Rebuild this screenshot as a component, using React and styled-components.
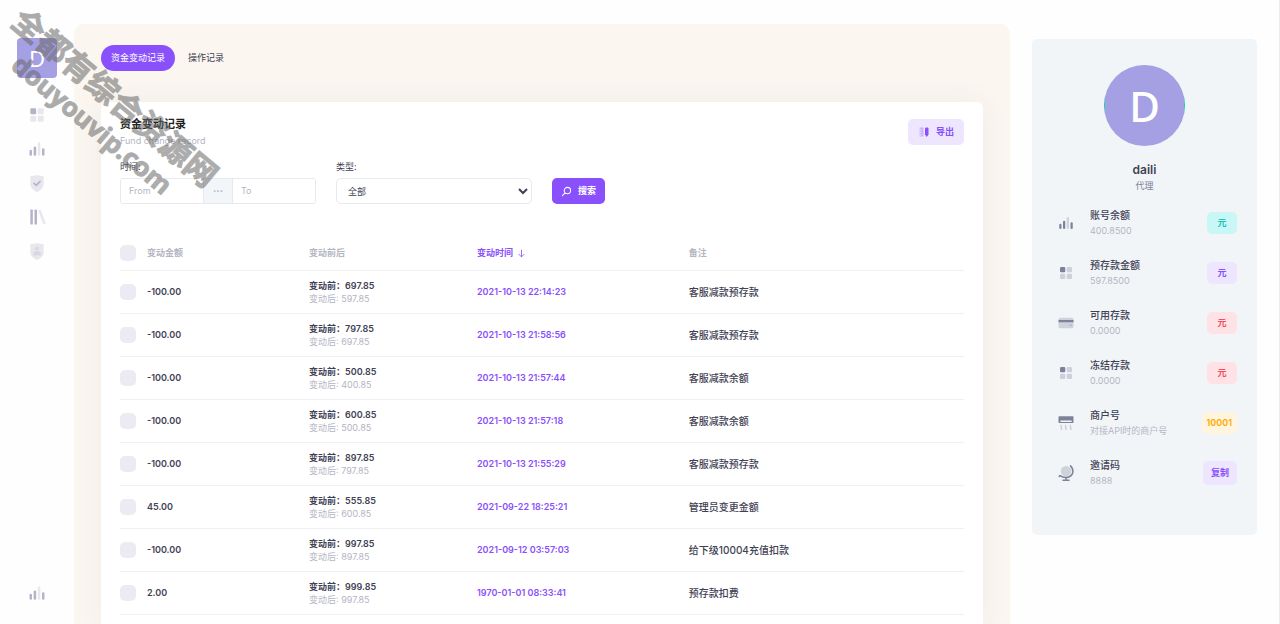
import React, { useState } from "react";
import styled, { createGlobalStyle } from "styled-components";

const GlobalStyle = createGlobalStyle`
  * {
    box-sizing: border-box;
  }

  body {
    margin: 0;
    background: #fefefe;
    color: #3f4254;
    font-family: Inter, "Noto Sans CJK SC", sans-serif;
    font-size: 9px;
    line-height: 14px;
  }

  button,
  input,
  select {
    font: inherit;
    color: inherit;
    margin: 0;
  }

  button {
    border: none;
    background: none;
    padding: 0;
    cursor: pointer;
  }
`;

const Shell = styled.div`
  position: relative;
  display: flex;
  min-height: 100vh;
`;

const Sidebar = styled.aside`
  flex: 0 0 74px;
  display: flex;
  flex-direction: column;
  align-items: center;
  padding: 38px 0 14px;
`;

const Logo = styled.a`
  width: 40px;
  height: 40px;
  border-radius: 4px;
  background: #a5a0e3;
  color: #fff;
  font: 22px/40px "Noto Sans", sans-serif;
  text-align: center;
  text-decoration: none;
`;

const SideNav = styled.nav`
  display: flex;
  flex-direction: column;
  margin-top: 20px;
`;

const SideButton = styled.button`
  display: flex;
  align-items: center;
  justify-content: center;
  width: 34px;
  height: 34px;
  margin-top: ${({ $bottom }) => ($bottom ? "auto" : 0)};
  color: #b5b3c9;
`;

const Main = styled.main`
  flex: 1;
  min-width: 0;
  display: flex;
  flex-direction: column;
  margin-top: 24px;
  padding: 21px 27px 0;
  border-radius: 10px 10px 0 0;
  background: #fbf6f0;
`;

const Tabs = styled.div`
  display: flex;
  gap: 3px;
`;

const Tab = styled.button`
  height: 26px;
  padding: 0 10px;
  border-radius: 13px;
  background: ${({ $active }) => ($active ? "#8950fc" : "transparent")};
  color: ${({ $active }) => ($active ? "#fff" : "#3f4254")};
`;

const Card = styled.section`
  flex: 1;
  margin-top: 31px;
  padding: 14px 19px 9px;
  border-radius: 6px 6px 0 0;
  background: #fff;
  box-shadow: 0 0 30px rgba(82, 63, 105, 0.06);
`;

const CardHeader = styled.header`
  display: flex;
  justify-content: space-between;
  align-items: center;
`;

const Title = styled.h3`
  margin: 0;
  font-size: 11px;
  line-height: 16px;
  font-weight: 700;
  color: #212121;
`;

const Subtitle = styled.p`
  margin: 2px 0 0;
  line-height: 14px;
  color: #b5b5c3;
`;

const ActionButton = styled.button`
  display: flex;
  align-items: center;
  justify-content: center;
  gap: 6px;
  height: 26px;
  padding: 0 ${({ $light }) => ($light ? "10px" : "9px")};
  border-radius: 5px;
  font-weight: 600;
  background: ${({ $light }) => ($light ? "#eee5ff" : "#8950fc")};
  color: ${({ $light }) => ($light ? "#8950fc" : "#fff")};
`;

const Filters = styled.form`
  display: grid;
  grid-template-columns: repeat(4, 1fr);
  column-gap: 20px;
  align-items: end;
  justify-items: start;
  margin-top: 12px;
`;

const Field = styled.div`
  width: 100%;

  label {
    display: block;
    margin-bottom: 4px;
  }
`;

const DateRange = styled.div`
  display: flex;
  height: 26px;
  border: 1px solid #e8e8f0;
  border-radius: 3px;
  overflow: hidden;

  input {
    flex: 1;
    width: 0;
    padding: 0 8px;
    border: none;
    outline: none;
    background: #fff;
  }

  input::placeholder {
    color: #b5b5c3;
  }

  span {
    width: 30px;
    display: flex;
    align-items: center;
    justify-content: center;
    border: solid #e8e8f0;
    border-width: 0 1px;
    background: #f3f6f9;
    color: #b5b5c3;
    font-size: 6px;
  }
`;

const Select = styled.select`
  display: block;
  width: 100%;
  height: 26px;
  padding: 0 7px;
  border: 1px solid #e8e8f0;
  border-radius: 5px;
  background: #fff;
`;

const Table = styled.table`
  width: 100%;
  margin-top: 33px;
  table-layout: fixed;
  border-collapse: collapse;
  text-align: left;

  th {
    height: 33px;
    padding: 0;
    font-weight: 600;
    color: #b5b5c3;
    border-bottom: 1px solid #f0f0f5;
  }

  td {
    height: 43px;
    padding: 0;
    font-weight: 600;
    border-bottom: 1px solid #f0f0f5;
  }
`;

const Checkbox = styled.input`
  display: block;
  appearance: none;
  width: 16px;
  height: 16px;
  border-radius: 5px;
  background: #ebebf3;

  &:checked {
    background: #8950fc;
  }
`;

const SortButton = styled.button`
  display: flex;
  align-items: center;
  gap: 4px;
  color: #8950fc;
`;

const Before = styled.div`
  line-height: 13px;
`;

const After = styled.div`
  line-height: 13px;
  font-weight: 400;
  color: #b5b5c3;
`;

const DateCell = styled.td`
  color: #8950fc;
`;

const NoteCell = styled.td`
  && {
    font-size: 10px;
    font-weight: 500;
  }
`;

const Profile = styled.aside`
  flex: 0 0 270px;
  padding: 39px 22px 0;
  border-right: 1px solid #ececec;
`;

const ProfileCard = styled.div`
  padding: 26px 20px 32px;
  border-radius: 5px;
  background: #f2f5f8;
`;

const Avatar = styled.div`
  width: 81px;
  height: 81px;
  margin: 0 auto;
  border-radius: 50%;
  background: linear-gradient(#a5a0e3, #a5a0e3) center / 79px 81px no-repeat
    #1bc5bd;
  color: #fff;
  font: 500 42px/81px "Noto Sans", sans-serif;
  text-align: center;
`;

const UserName = styled.h4`
  margin: 15px 0 0;
  font-size: 12px;
  line-height: 18px;
  font-weight: 600;
  text-align: center;
`;

const Role = styled.p`
  margin: 0 0 10px;
  color: #7e8299;
  text-align: center;
`;

const InfoRow = styled.div`
  display: flex;
  align-items: center;
  height: 50px;
  padding: 0 0 10px 5px;
  color: #7e8299;

  svg {
    flex: none;
    margin-right: 15px;
  }
`;

const InfoText = styled.div`
  flex: 1;
  white-space: nowrap;

  strong {
    display: block;
    font-size: 10px;
    line-height: 16px;
    font-weight: 500;
    color: #3f4254;
  }

  span {
    display: block;
    line-height: 16px;
    color: #b5b5c3;
  }
`;

const tones = {
  teal: ["#c9f7f5", "#1bc5bd"],
  purple: ["#eee5ff", "#8950fc"],
  red: ["#ffe2e5", "#f64e60"],
  orange: ["#fff4de", "#ffa800"],
};

const Badge = styled.span`
  min-width: 30px;
  padding: 4px 5px;
  border-radius: 5px;
  font-weight: 600;
  text-align: center;
  background: ${({ $tone }) => tones[$tone][0]};
  color: ${({ $tone }) => tones[$tone][1]};
`;

const CopyButton = styled(Badge)`
  padding: 5px 8px;
`;

const Watermark = styled.div`
  position: absolute;
  top: 0;
  left: 30px;
  transform: rotate(40deg);
  transform-origin: 0 0;
  font-family: "Open Sans", "Noto Sans CJK SC", sans-serif;
  font-weight: 700;
  color: #696969;
  opacity: 0.55;
  white-space: nowrap;
  pointer-events: none;

  div {
    -webkit-text-stroke: 1px #696969;
  }

  div:first-child {
    font-size: 32px;
    line-height: 40px;
  }

  div:last-child {
    padding-left: 28px;
    font-size: 26px;
    line-height: 30px;
  }
`;

const SHIELD =
  "M4 4l7.63-1.43c.24-.05.5-.05.74 0L20 4v9.28c0 2.94-1.51 5.66-4 7.22l-3.47 2.17c-.32.2-.74.2-1.06 0L8 20.5c-2.49-1.56-4-4.28-4-7.22z";

const shapes = {
  bars: (
    <>
      <rect opacity=".3" x="13" y="4" width="3" height="16" rx="1.5" />
      <rect x="8" y="9" width="3" height="11" rx="1.5" />
      <rect x="18" y="11" width="3" height="9" rx="1.5" />
      <rect x="3" y="13" width="3" height="7" rx="1.5" />
    </>
  ),
  blocks: (
    <>
      <rect x="4" y="4" width="7" height="7" rx="1.5" />
      <g opacity=".3">
        <rect x="13" y="4" width="7" height="7" rx="1.5" />
        <rect x="4" y="13" width="7" height="7" rx="1.5" />
        <rect x="13" y="13" width="7" height="7" rx="1.5" />
      </g>
    </>
  ),
  shieldCheck: (
    <>
      <path opacity=".3" d={SHIELD} />
      <path
        d="M8.5 12.5l2.6 2.3 4.6-4.8"
        fill="none"
        stroke="currentColor"
        strokeWidth="2"
        strokeLinecap="round"
      />
    </>
  ),
  shieldUser: (
    <>
      <path opacity=".3" d={SHIELD} />
      <circle opacity=".3" cx="12" cy="9" r="2.2" />
      <path
        opacity=".3"
        d="M7 16.5c.2-2.8 2.3-4.5 5-4.5s4.8 1.7 5 4.5c0 .3-.2.5-.5.5h-9c-.3 0-.5-.2-.5-.5z"
      />
    </>
  ),
  library: (
    <>
      <rect x="4" y="3" width="3" height="18" rx="1" />
      <rect x="9" y="3" width="3" height="18" rx="1" />
      <rect
        opacity=".3"
        x="16.5"
        y="3"
        width="3"
        height="18"
        rx="1"
        transform="rotate(-20 18 12)"
      />
    </>
  ),
  card: (
    <>
      <rect opacity=".3" x="2" y="5" width="20" height="14" rx="2" />
      <rect x="2" y="8" width="20" height="3" />
      <rect opacity=".3" x="16" y="14" width="4" height="2" rx="1" />
    </>
  ),
  airCon: (
    <>
      <path
        fillRule="evenodd"
        d="M3 3h18a1 1 0 0 1 1 1v7a1 1 0 0 1-1 1H3a1 1 0 0 1-1-1V4a1 1 0 0 1 1-1zm1.5 5.5v2h15v-2z"
      />
      <path
        opacity=".35"
        d="M5.5 15c-1 2 1 3 .5 5.5M11.5 15c-1 2 1 3 .5 5.5M18 15c-1 2 1 3 .5 5.5"
        fill="none"
        stroke="currentColor"
        strokeWidth="1.8"
        strokeLinecap="round"
      />
    </>
  ),
  globe: (
    <>
      <circle opacity=".3" cx="12" cy="9.5" r="7" />
      <path
        d="M18 2.5c5 5 4 12-1.5 14.5-4.5 2-9 1-12.5-1.5l-1 1M12 18v3M8 21.5h8"
        fill="none"
        stroke="currentColor"
        strokeWidth="2"
        strokeLinecap="round"
      />
    </>
  ),
  tools: (
    <>
      <path
        opacity=".35"
        d="M3 3h8v18H3v-2h4v-2H3v-3h4v-2H3V9h4V7H3z"
      />
      <path d="M14 5c0-3 7-3 7 0v12l-3.5 5L14 17z" />
    </>
  ),
  search: (
    <path
      d="M14 3a7 7 0 1 1 0 14 7 7 0 0 1 0-14zM9 15l-6 6"
      fill="none"
      stroke="currentColor"
      strokeWidth="2.2"
      strokeLinecap="round"
    />
  ),
  arrowDown: (
    <path
      d="M12 3v17M5 14l7 7 7-7"
      fill="none"
      stroke="currentColor"
      strokeWidth="2.2"
      strokeLinecap="round"
      strokeLinejoin="round"
    />
  ),
};

const Icon = ({ name, size = 20 }) => (
  <svg
    width={size}
    height={size}
    viewBox="0 0 24 24"
    fill="currentColor"
    aria-hidden="true"
  >
    {shapes[name]}
  </svg>
);

const navItems = [
  { icon: "blocks", label: "首页" },
  { icon: "bars", label: "统计" },
  { icon: "shieldCheck", label: "安全" },
  { icon: "library", label: "记录" },
  { icon: "shieldUser", label: "账户" },
];

const records = [
  ["-100.00", "697.85", "597.85", "2021-10-13 22:14:23", "客服减款预存款"],
  ["-100.00", "797.85", "697.85", "2021-10-13 21:58:56", "客服减款预存款"],
  ["-100.00", "500.85", "400.85", "2021-10-13 21:57:44", "客服减款余额"],
  ["-100.00", "600.85", "500.85", "2021-10-13 21:57:18", "客服减款余额"],
  ["-100.00", "897.85", "797.85", "2021-10-13 21:55:29", "客服减款预存款"],
  ["45.00", "555.85", "600.85", "2021-09-22 18:25:21", "管理员变更金额"],
  ["-100.00", "997.85", "897.85", "2021-09-12 03:57:03", "给下级10004充值扣款"],
  ["2.00", "999.85", "997.85", "1970-01-01 08:33:41", "预存款扣费"],
];

const infos = [
  { icon: "bars", title: "账号余额", text: "400.8500", badge: "元", tone: "teal" },
  { icon: "blocks", title: "预存款金额", text: "597.8500", badge: "元", tone: "purple" },
  { icon: "card", title: "可用存款", text: "0.0000", badge: "元", tone: "red" },
  { icon: "blocks", title: "冻结存款", text: "0.0000", badge: "元", tone: "red" },
  { icon: "airCon", title: "商户号", text: "对接API时的商户号", badge: "10001", tone: "orange" },
  { icon: "globe", title: "邀请码", text: "8888", badge: "复制", tone: "purple", copy: true },
];

const RecordTable = () => {
  const [selected, setSelected] = useState([]);
  const allSelected = selected.length === records.length;

  const toggleAll = () => {
    setSelected(allSelected ? [] : records.map((_, i) => i));
  };

  const toggle = (index) => {
    setSelected((prev) =>
      prev.includes(index) ? prev.filter((i) => i !== index) : [...prev, index]
    );
  };

  return (
    <Table>
      <colgroup>
        <col style={{ width: "3.2%" }} />
        <col style={{ width: "19.2%" }} />
        <col style={{ width: "19.9%" }} />
        <col style={{ width: "25.1%" }} />
        <col />
      </colgroup>
      <thead>
        <tr>
          <th>
            <Checkbox
              type="checkbox"
              aria-label="全选"
              checked={allSelected}
              onChange={toggleAll}
            />
          </th>
          <th>变动金额</th>
          <th>变动前后</th>
          <th>
            <SortButton type="button">
              变动时间 <Icon name="arrowDown" size={9} />
            </SortButton>
          </th>
          <th>备注</th>
        </tr>
      </thead>
      <tbody>
        {records.map(([amount, before, after, time, note], index) => (
          <tr key={time}>
            <td>
              <Checkbox
                type="checkbox"
                aria-label={time}
                checked={selected.includes(index)}
                onChange={() => toggle(index)}
              />
            </td>
            <td>{amount}</td>
            <td>
              <Before>变动前：{before}</Before>
              <After>变动后: {after}</After>
            </td>
            <DateCell>{time}</DateCell>
            <NoteCell>{note}</NoteCell>
          </tr>
        ))}
      </tbody>
    </Table>
  );
};

const App = () => {
  const [tab, setTab] = useState("资金变动记录");

  return (
    <Shell>
      <GlobalStyle />
      <Sidebar>
        <Logo href="#">D</Logo>
        <SideNav>
          {navItems.map(({ icon, label }) => (
            <SideButton key={icon} type="button" aria-label={label}>
              <Icon name={icon} />
            </SideButton>
          ))}
        </SideNav>
        <SideButton type="button" aria-label="报表" $bottom>
          <Icon name="bars" />
        </SideButton>
      </Sidebar>

      <Main>
        <Tabs>
          {["资金变动记录", "操作记录"].map((name) => (
            <Tab
              key={name}
              type="button"
              $active={tab === name}
              onClick={() => setTab(name)}
            >
              {name}
            </Tab>
          ))}
        </Tabs>
        <Card>
          <CardHeader>
            <div>
              <Title>资金变动记录</Title>
              <Subtitle>Fund change record</Subtitle>
            </div>
            <ActionButton type="button" $light>
              <Icon name="tools" size={12} />
              导出
            </ActionButton>
          </CardHeader>
          <Filters onSubmit={(e) => e.preventDefault()}>
            <Field>
              <label htmlFor="from">时间:</label>
              <DateRange>
                <input id="from" type="text" placeholder="From" />
                <span>•••</span>
                <input type="text" placeholder="To" aria-label="To" />
              </DateRange>
            </Field>
            <Field>
              <label htmlFor="type">类型:</label>
              <Select id="type" defaultValue="all">
                <option value="all">全部</option>
              </Select>
            </Field>
            <ActionButton type="submit">
              <Icon name="search" size={11} />
              搜索
            </ActionButton>
          </Filters>
          <RecordTable />
        </Card>
      </Main>

      <Profile>
        <ProfileCard>
          <Avatar>D</Avatar>
          <UserName>daili</UserName>
          <Role>代理</Role>
          {infos.map(({ icon, title, text, badge, tone, copy }) => (
            <InfoRow key={title}>
              <Icon name={icon} size={18} />
              <InfoText>
                <strong>{title}</strong>
                <span>{text}</span>
              </InfoText>
              {copy ? (
                <CopyButton as="button" type="button" $tone={tone}>
                  {badge}
                </CopyButton>
              ) : (
                <Badge $tone={tone}>{badge}</Badge>
              )}
            </InfoRow>
          ))}
        </ProfileCard>
      </Profile>

      <Watermark>
        <div>全都有综合资源网</div>
        <div>douyouvip.com</div>
      </Watermark>
    </Shell>
  );
};

export default App;
